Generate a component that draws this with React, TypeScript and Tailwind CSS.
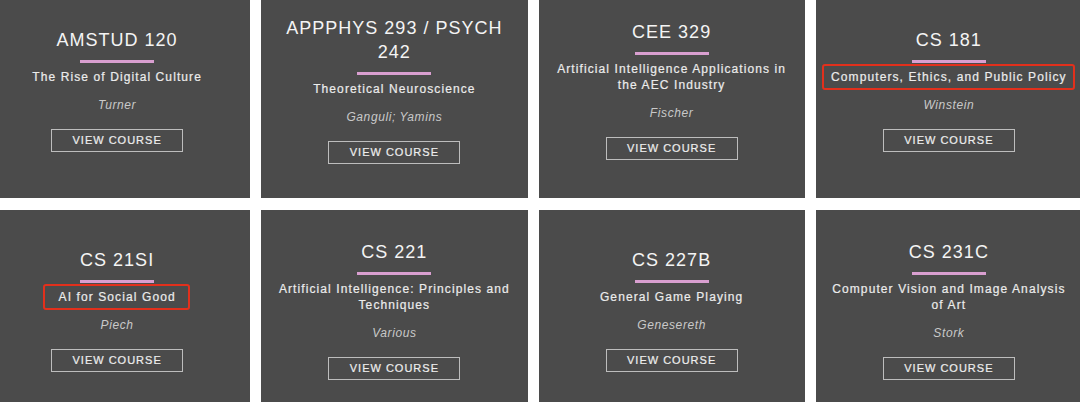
import React from "react";

type Course = {
  code: string;
  title: string;
  author: string;
  mark?: "a" | "b";
};

const courses: Course[] = [
  { code: "AMSTUD 120", title: "The Rise of Digital Culture", author: "Turner" },
  { code: "APPPHYS 293 / PSYCH 242", title: "Theoretical Neuroscience", author: "Ganguli; Yamins" },
  { code: "CEE 329", title: "Artificial Intelligence Applications in the AEC Industry", author: "Fischer" },
  { code: "CS 181", title: "Computers, Ethics, and Public Policy", author: "Winstein", mark: "a" },
  { code: "CS 21SI", title: "AI for Social Good", author: "Piech", mark: "b" },
  { code: "CS 221", title: "Artificial Intelligence: Principles and Techniques", author: "Various" },
  { code: "CS 227B", title: "General Game Playing", author: "Genesereth" },
  { code: "CS 231C", title: "Computer Vision and Image Analysis of Art", author: "Stork" },
];

function Card({ c }: { c: Course }) {
  return (
    <div className="h-[208px] bg-[#4b4b4b] flex flex-col items-center justify-center px-[12px] pb-[8px] text-center">
      <div className="text-[18px] leading-[24px] tracking-[1px] text-[#f4f4f4]">{c.code}</div>
      <div className="mt-[8px] h-[3px] w-[74px] bg-[#d99fd0]" />
      <div className="mt-[6px] relative text-[12px] leading-[16px] tracking-[1.1px] text-[#ececec] [-webkit-text-stroke:0.2px_#ececec]">
        {c.title}
        {c.mark === "a" && (
          <span className="absolute -left-[9px] -right-[8px] -top-[5px] -bottom-[5px] border-2 border-[#e2301c] rounded-[3px]" />
        )}
        {c.mark === "b" && (
          <span className="absolute -left-[16px] -right-[14px] -top-[5px] -bottom-[5px] border-2 border-[#e2301c] rounded-[3px]" />
        )}
      </div>
      <div className="mt-[12px] text-[12px] leading-[16px] italic tracking-[0.6px] text-[#c9c9c9]">{c.author}</div>
      <div className="mt-[16px] w-[132px] h-[23px] border border-[#bdbdbd] flex items-center justify-center text-[11px] tracking-[1px] text-[#eeeeee] [-webkit-text-stroke:0.2px_#eeeeee]">
        VIEW COURSE
      </div>
    </div>
  );
}

export default function App() {
  return (
    <div className="w-[1080px] h-[402px] overflow-hidden bg-white" style={{ fontFamily: '"Liberation Sans", Arial, sans-serif' }}>
      <div className="w-[1098px] -ml-[16px] -mt-[10px] grid grid-cols-4 gap-x-[11px] gap-y-[12px]">
        {courses.map((c) => (
          <Card key={c.code} c={c} />
        ))}
      </div>
    </div>
  );
}
